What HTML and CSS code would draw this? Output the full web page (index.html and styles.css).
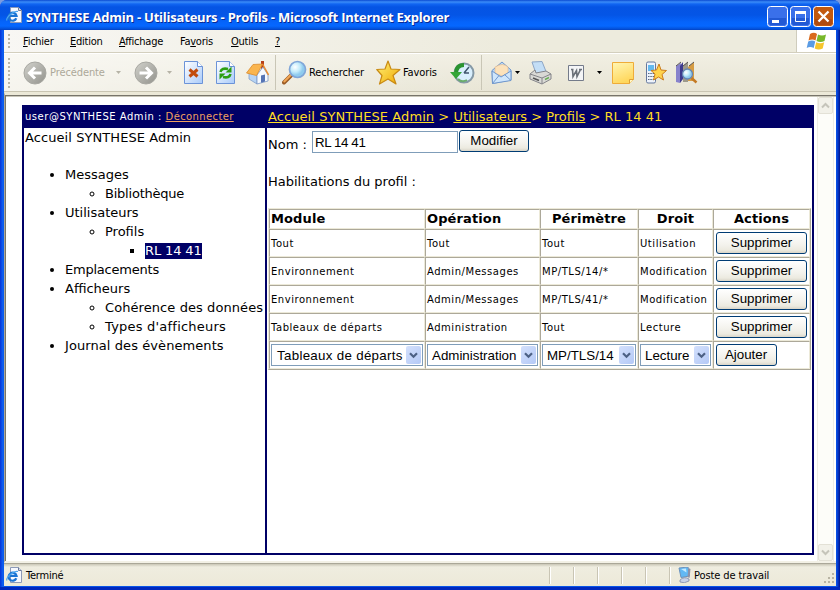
FILE: index.html
```html
<!DOCTYPE html>
<html lang="fr">
<head>
<meta charset="utf-8">
<title>SYNTHESE Admin - Utilisateurs - Profils</title>
<link rel="stylesheet" href="styles.css">
</head>
<body>
<svg class="defs" width="0" height="0">
  <defs>
    <linearGradient id="gray" x1="0" y1="0" x2="1" y2="1"><stop offset="0" stop-color="#d2d2cc"/><stop offset="1" stop-color="#92928c"/></linearGradient>
    <linearGradient id="sheet" x1="0" y1="0" x2="1" y2="1"><stop offset="0" stop-color="#fff"/><stop offset="1" stop-color="#a9cbfa"/></linearGradient>
    <linearGradient id="gold" x1="0" y1="0" x2="1" y2="1"><stop offset="0" stop-color="#fff27a"/><stop offset="1" stop-color="#f0a800"/></linearGradient>
    <linearGradient id="paper" x1="0" y1="0" x2=".4" y2="1"><stop offset="0" stop-color="#fff6b4"/><stop offset="1" stop-color="#ffd75c"/></linearGradient>
    <radialGradient id="lens" cx=".35" cy=".35"><stop offset="0" stop-color="#fff"/><stop offset=".6" stop-color="#c4ecfb"/><stop offset="1" stop-color="#8fcbee"/></radialGradient>
    <symbol id="ie" viewBox="0 0 17 17">
      <path d="M4.500.5h8l3 3v12h-11z" fill="#f7f9ff" stroke="#8d9ab8"/><path d="M12.500.5v3h3" fill="#d6ddec" stroke="#6b7898"/>
      <path d="M10.300 11.300A4 4 0 1 1 10.500 8.800H4" fill="none" stroke="#1b74d4" stroke-width="2.200"/>
      <path d="M1 13.500C-.5 11 7 3.500 12 4.500" fill="none" stroke="#4aa5ee" stroke-width="1.200"/>
    </symbol>
    <symbol id="drop" viewBox="0 0 5 3"><path d="M0 0h5L2.500 3z" fill="currentColor"/></symbol>
    <symbol id="chev" viewBox="0 0 9 7"><path d="M1 1.200l3.500 3.500L8 1.200" fill="none" stroke="#4d6185" stroke-width="2.200"/></symbol>
  </defs>
</svg>
<div class="window">
  <header class="titlebar">
    <svg class="app-icon" width="17" height="17"><use href="#ie"/></svg>
    <span class="title">SYNTHESE Admin - Utilisateurs - Profils - Microsoft Internet Explorer</span>
    <div class="controls">
      <svg width="21" height="21"><rect x=".5" y=".5" width="20" height="20" rx="3" fill="#3a70ea" stroke="#fff"/><path d="M2 12h17v5q0 2-2 2H4q-2 0-2-2z" fill="#2259d4"/><path d="M5 14h7v3H5z" fill="#fff"/></svg>
      <svg width="21" height="21"><rect x=".5" y=".5" width="20" height="20" rx="3" fill="#3a70ea" stroke="#fff"/><path d="M2 12h17v5q0 2-2 2H4q-2 0-2-2z" fill="#2259d4"/><path d="M5.500 6.500h10v9h-10z" fill="none" stroke="#fff"/><path d="M5 5h11v3H5z" fill="#fff"/></svg>
      <svg width="21" height="21"><rect x=".5" y=".5" width="20" height="20" rx="3" fill="#c2590f" stroke="#fff"/><path d="M2 13h17v4q0 2-2 2H4q-2 0-2-2z" fill="#b04c10"/><path d="M5.500 5.500l10 10M15.500 5.500l-10 10" stroke="#fff" stroke-width="2.300"/></svg>
    </div>
  </header>
  <nav class="menubar">
    <i class="grip"></i>
    <span class="m1"><u>F</u>ichier</span><span class="m2"><u>E</u>dition</span><span class="m3"><u>A</u>ffichage</span><span class="m4">Fa<u>v</u>oris</span><span class="m5"><u>O</u>utils</span><span><u>?</u></span>
    <div class="flag">
      <svg width="21" height="19" viewBox="0 0 21 19"><path d="M4 2q4-2.500 7 0L9.500 8.500q-3-2-7 0z" fill="#d96a1c"/><path d="M12 2.500q4 2 8 0L18.500 9q-4 2-8 0z" fill="#78b82a"/><path d="M2.200 9.500q4-2 7 0L7.700 16q-3.500-2-7 0z" fill="#5a9be4"/><path d="M10.200 10.200q4 2 8 0l-1.500 6.300q-4 2-8 0z" fill="#f6c52c"/></svg>
    </div>
  </nav>
  <div class="toolbar">
    <i class="grip"></i>
    <div class="tool back">
      <svg width="24" height="24" viewBox="0 0 24 24"><circle cx="12" cy="12" r="11" fill="url(#gray)" stroke="#a8a8a2"/><path d="M18.500 12H7M12 6.500L6.500 12l5.500 5.500" fill="none" stroke="#fff" stroke-width="3"/></svg>
      <span>Précédente</span>
    </div>
    <svg class="drop pale d1" width="5" height="3"><use href="#drop"/></svg>
    <svg class="fwd" width="24" height="24" viewBox="0 0 24 24"><circle cx="12" cy="12" r="11" fill="url(#gray)" stroke="#a8a8a2"/><path d="M5.500 12H17M12 6.500l5.500 5.500-5.500 5.500" fill="none" stroke="#fff" stroke-width="3"/></svg>
    <svg class="drop pale d2" width="5" height="3"><use href="#drop"/></svg>
    <svg class="stop" width="19" height="23" viewBox="0 0 19 23"><path d="M.5.5h13l5 5v17H.5z" fill="url(#sheet)" stroke="#6b93d8"/><path d="M13.500.5v5h5" fill="#fff" stroke="#6b93d8"/><path d="M5.500 8.500l8 7M13.500 8.500l-8 7" stroke="#c24c0c" stroke-width="3"/></svg>
    <svg class="refresh" width="19" height="23" viewBox="0 0 19 23"><path d="M.5.5h13l5 5v17H.5z" fill="url(#sheet)" stroke="#6b93d8"/><path d="M13.500.5v5h5" fill="#fff" stroke="#6b93d8"/><path d="M4.500 11q1-4.500 7.500-3M14.500 13q-1 4.500-7.500 3" fill="none" stroke="#2c9e12" stroke-width="2.600"/><path d="M15.500 5.500v6h-6zM3.500 18.500v-6h6z" fill="#2c9e12"/></svg>
    <svg class="home" width="23" height="24" viewBox="0 0 23 24"><path d="M15 0h3v8h-3z" fill="#b8401a"/><path d="M3 11v7l8 5V12z" fill="#b7d4f4" stroke="#7896c4" stroke-width=".7"/><path d="M11 14l6-8 5 8v6l-11 3z" fill="#f6faff" stroke="#7896c4" stroke-width=".8"/><path d="M.5 12L7 3.500 16.500 3l-6 11.500z" fill="#fab54e" stroke="#dc8b2c" stroke-width=".8"/><path d="M16.500 3l6 11" stroke="#e98c32" stroke-width="1.500"/><path d="M15 14.500l4-1v7l-4 1.200z" fill="#5574b4"/></svg>
    <i class="sep"></i>
    <div class="tool search">
      <svg width="25" height="25" viewBox="0 0 25 25"><path d="M2 22.500l9-9" stroke="#9a5b26" stroke-width="4" stroke-linecap="round"/><path d="M2.300 21.500l8-8" stroke="#f1a655" stroke-width="2" stroke-linecap="round"/><circle cx="15.500" cy="9.500" r="8" fill="url(#lens)" stroke="#80a6d8" stroke-width="1.700"/></svg>
      <span>Rechercher</span>
    </div>
    <div class="tool favs">
      <svg width="25" height="25" viewBox="0 0 25 25"><path d="M12 1l3 8 9 .5-7 6 3 8.500-8-5-8.500 5L6 15.500.8 9.500 9 9z" fill="url(#gold)" stroke="#c98a14" stroke-width="1.200" stroke-linejoin="round"/></svg>
      <span>Favoris</span>
    </div>
    <svg class="history" width="25" height="24" viewBox="0 0 25 24"><circle cx="14" cy="12" r="9.500" fill="#d9effd" stroke="#8599a6" stroke-width="2"/><path d="M14 12l5-6M14 12h5" stroke="#40566e" stroke-width="1.500"/><path d="M14 4q-8 0-8 9" fill="none" stroke="#2a9430" stroke-width="4"/><path d="M0 11h12l-6 7z" fill="#34a637"/><path d="M8 18q4 4 9 1" fill="none" stroke="#6aac6c" stroke-width="2"/></svg>
    <i class="sep"></i>
    <svg class="mail" width="21" height="24" viewBox="0 0 21 24"><path d="M1 9.500L11 1l9 8v10L1.500 22.500z" fill="#b8d8f8" stroke="#7097cc"/><path d="M4 9V6q8-5 13 0v6l-6 3-7-3z" fill="#fce2bb" stroke="#e4b684" stroke-width=".6"/><path d="M1 10l9 6 10-6v9.500L1.500 22.500z" fill="#cfe6fc" stroke="#7097cc"/><path d="M1.500 22.500L8 14.500M20 19.500l-6.500-6" stroke="#7097cc"/></svg>
    <svg class="drop d3" width="5" height="3"><use href="#drop"/></svg>
    <svg class="printer" width="23" height="24" viewBox="0 0 23 24"><path d="M3 1l10-.5 4 10-10 2z" fill="#c3def6" stroke="#8ca5c5"/><path d="M1 13l5-4 1 3 10-2 5 3v5l-9 5-12-5z" fill="#d9d9d5" stroke="#85858a"/><path d="M1 13l12 4 9-4M13 17v6" fill="none" stroke="#85858a"/><path d="M4 17l6 2.500" stroke="#555" stroke-width="1.500"/><path d="M16 18.500l4-2" stroke="#69ad57" stroke-width="1.500"/></svg>
    <svg class="word" width="16" height="16" viewBox="0 0 16 16"><path d="M.5.500h15v15H.5z" fill="#f4f5f7" stroke="#747b8a"/><path d="M3 4.500h2.500M4.500 4.500l.5 7 3.500-6 .5 6 3.500-7M11 4.500h3" fill="none" stroke="#6a7078" stroke-width="1.600"/></svg>
    <svg class="drop d4" width="5" height="3"><use href="#drop"/></svg>
    <svg class="note" width="22" height="22" viewBox="0 0 22 22"><path d="M.5.500h21v17l-4 4H.5z" fill="url(#paper)" stroke="#efac38"/><path d="M17.500 21.500v-4h4" fill="#fff6c5" stroke="#dfa034"/></svg>
    <svg class="phone" width="21" height="23" viewBox="0 0 21 23"><rect x=".5" y="1" width="9" height="21" rx="1.500" fill="#edf3fc" stroke="#65789d"/><path d="M2 4h6v6H2z" fill="#63b9ee"/><path d="M2 12.500h6M2 15.500h6M2 18.500h6" stroke="#596880" stroke-dasharray="1.500 .8"/><path d="M13 3l2 6 5.500.5-4.500 4 1.500 5.500-5-3-5 3L9 13 5 9.500l5.500-.5z" fill="#ffd34c" stroke="#cc7c1b"/></svg>
    <svg class="books" width="23" height="23" viewBox="0 0 23 23"><path d="M1 5l5-3v17l-1 3-4-1z" fill="#8782cc"/><path d="M5 5l3-4v17l-3 4z" fill="#3e3b8e"/><path d="M8 5l5-4v20H8z" fill="#9d9a8b"/><path d="M13 6l6-5v19h-6z" fill="#d59c44"/><path d="M1 5L6 1M8 5l5-4M14 5l5-4" stroke="#565253"/><circle cx="12.500" cy="13" r="5" fill="url(#lens)" stroke="#6585b3" stroke-width="1.300"/><path d="M16.500 17l5 4.500" stroke="#c47a24" stroke-width="2.500"/></svg>
  </div>
  <div class="client">
    <main class="page">
      <div class="frame">
        <div class="user">user@SYNTHESE Admin : <a>Déconnecter</a></div>
        <div class="crumbs"><a class="first">Accueil SYNTHESE Admin</a> &gt; <a>Utilisateurs </a>&gt; <a>Profils</a> &gt; RL 14 41</div>
        <aside class="tree">
          <div class="first">Accueil SYNTHESE Admin</div>
          <ul>
            <li>Messages<ul><li class="tight">Bibliothèque</li></ul></li>
            <li>Utilisateurs<ul><li>Profils<ul><li><span class="current">RL 14 41</span></li></ul></li></ul></li>
            <li class="tight">Emplacements</li>
            <li>Afficheurs<ul><li class="first">Cohérence des données</li><li class="wide">Types d'afficheurs</li></ul></li>
            <li class="first">Journal des évènements</li>
          </ul>
        </aside>
        <section class="content">
          <div class="name-row"><label>Nom :</label><input value="RL 14 41"><button class="modify">Modifier</button></div>
          <p class="caption">Habilitations du profil :</p>
          <table>
            <colgroup><col class="c1"><col class="c2"><col class="c3"><col class="c4"><col class="c5"></colgroup>
            <tr><th class="left">Module</th><th class="left">Opération</th><th>Périmètre</th><th>Droit</th><th>Actions</th></tr>
            <tr><td>Tout</td><td>Tout</td><td>Tout</td><td>Utilisation</td><td><button>Supprimer</button></td></tr>
            <tr><td>Environnement</td><td>Admin/Messages</td><td>MP/TLS/14/*</td><td>Modification</td><td><button>Supprimer</button></td></tr>
            <tr><td>Environnement</td><td>Admin/Messages</td><td>MP/TLS/41/*</td><td>Modification</td><td><button>Supprimer</button></td></tr>
            <tr><td>Tableaux de départs</td><td>Administration</td><td>Tout</td><td>Lecture</td><td><button>Supprimer</button></td></tr>
            <tr class="form">
              <td><div class="select loose">Tableaux de départs<i><svg width="9" height="7"><use href="#chev"/></svg></i></div></td>
              <td><div class="select">Administration<i><svg width="9" height="7"><use href="#chev"/></svg></i></div></td>
              <td><div class="select">MP/TLS/14<i><svg width="9" height="7"><use href="#chev"/></svg></i></div></td>
              <td><div class="select">Lecture<i><svg width="9" height="7"><use href="#chev"/></svg></i></div></td>
              <td><button class="add">Ajouter</button></td>
            </tr>
          </table>
        </section>
      </div>
    </main>
    <div class="scrollbar">
      <span><svg width="9" height="7" viewBox="0 0 9 7"><path d="M1 5.500L4.500 2 8 5.500" fill="none" stroke="#c5c4ba" stroke-width="2"/></svg></span>
      <span><svg width="9" height="7" viewBox="0 0 9 7"><path d="M1 1.500L4.500 5 8 1.500" fill="none" stroke="#c5c4ba" stroke-width="2"/></svg></span>
    </div>
  </div>
  <footer class="statusbar">
    <div class="status"><svg width="17" height="17"><use href="#ie"/></svg><span>Terminé</span></div>
    <i></i><i></i><i></i><i></i><i></i>
    <div class="zone">
      <svg width="13" height="16" viewBox="0 0 13 16"><path d="M1 1l9-1 1.500 9L3 10.500z" fill="#62b8f4" stroke="#6b92bd"/><path d="M3 2l5-.5.5 4z" fill="#c5eaff"/><path d="M10.500 1l2 1-1 9-2-1z" fill="#8d91a8"/><path d="M2 13q4-4 9-1v2q-5 3-9 1z" fill="#c9d2e8" stroke="#7480a0" stroke-width=".7"/></svg>
      <span>Poste de travail</span>
      <svg class="resize" width="11" height="11" viewBox="0 0 11 11"><path d="M8 0h2v2H8zM4 4h2v2H4zM8 4h2v2H8zM0 8h2v2H0zM4 8h2v2H4zM8 8h2v2H8z" fill="#b8b4a3"/></svg>
    </div>
  </footer>
</div>
</body>
</html>
```
FILE: styles.css
```css
* { box-sizing: border-box; }
body { margin: 0; background: #7b9be0; overflow: hidden; }
svg { display: block; flex: none; }
.defs { position: absolute; }
i { font-style: normal; }
.window {
  width: 840px; height: 590px; display: flex; flex-direction: column;
  padding: 0 4px 4px; border-radius: 7px 7px 0 0;
  background: linear-gradient(90deg, #0733d8 0, #0e62f2 3px, #0855e8 4px, #0855e8 836px, #0748df 837px, #00138c 840px);
  box-shadow: inset 0 -3px 0 #0028bd;
  font: 11px/14px "DejaVu Sans Condensed", "DejaVu Sans", sans-serif; color: #000;
}
.titlebar {
  height: 30px; margin: 0 -4px; padding: 0 6px; display: flex; align-items: center; flex: none;
  border-radius: 7px 7px 0 0;
  background: linear-gradient(#0a4ad2 0, #3b8cf8 2px, #1165f2 4px, #0554e4 7px, #0455e6 15px, #0564fb 22px, #0567ff 26px, #0350d8 29px, #0340c0 30px);
}
.app-icon { margin: 0 3px 0 0; }
.title {
  font: bold 13px/16px "Open Sans", sans-serif; color: #fff; white-space: nowrap;
  text-shadow: 1px 1px 0 #0a2a94; margin-top: 3px; letter-spacing: -0.22px;
}
.controls { display: flex; gap: 2px; margin: 3px 0 0 auto; }
.menubar {
  height: 23px; display: flex; align-items: center; flex: none; padding-left: 4px;
  background: linear-gradient(90deg, #f8f7f4, #edebdd 60%); border-bottom: 1px solid #d3cfbe; letter-spacing: -0.25px;
}
.menubar span { white-space: nowrap; padding-top: 1px; }
.grip { width: 2px; height: 16px; background: repeating-linear-gradient(#b9b6a7 0 2px, transparent 2px 4px); flex: none; }
.menubar .grip { height: 14px; margin-right: 13px; }
.m1 { width: 47px; } .m2 { width: 49px; } .m3 { width: 61px; } .m4 { width: 51px; } .m5 { width: 44px; }
.flag {
  margin-left: auto; width: 40px; height: 22px; background: #fff; border-left: 1px solid #cfccbc;
  display: flex; align-items: center; justify-content: center;
}
.toolbar {
  height: 39px; flex: none; display: flex; align-items: center; padding-left: 4px;
  background: linear-gradient(90deg, rgba(255,255,255,.6), rgba(255,255,255,0) 60%), linear-gradient(#f1efe3, #e8e5d5);
  border-top: 1px solid #fff; border-bottom: 1px solid #c9c5b2;
}
.toolbar .grip { height: 30px; }
.tool { display: flex; align-items: center; gap: 3px; white-space: nowrap; }
.tool span { flex: none; letter-spacing: -0.1px; padding-top: 1px; }
.back { margin-left: 13px; width: 93px; color: #aca899; }
.pale { color: #b6b3a6; }
.d2 { margin-left: 9px; }
.fwd { margin-left: 13px; }
.stop { margin-left: 12px; }
.refresh { margin-left: 13px; }
.home { margin-left: 11px; }
.sep { width: 1px; height: 35px; background: #c9c6b6; margin-left: 6px; flex: none; }
.search { margin-left: 6px; width: 94px; gap: 2px; }
.favs { width: 74px; gap: 2px; }
.history { margin-left: 0; }
.mail { margin-left: 9px; }
.d3 { margin-left: 3px; }
.printer { margin-left: 9px; }
.word { margin-left: 16px; }
.d4 { margin-left: 13px; }
.note { margin-left: 10px; }
.phone { margin-left: 12px; }
.books { margin-left: 8px; }
.client {
  height: 471px; flex: none; display: flex; background: #fff; border-left: 1px solid #aca899;
  border-top: 3px solid #ece9d8; border-bottom: 2px solid #f3f1e6; box-shadow: inset 1px 1px 0 #77746a, inset 0 2px 0 #c9c7ba; padding: 2px 2px 0 1px;
}
.page { width: 811px; padding: 8px 3px 0 16px; font: 13px/19px "DejaVu Sans", Verdana, sans-serif; }
.frame {
  height: 450px; display: grid; grid-template: 21px 425px / 241px 545px; column-gap: 2px;
  background: #006; border: 2px solid #006;
}
.user { font-size: 10px; color: #fff; padding-left: 1px; line-height: 20px; white-space: nowrap; letter-spacing: 0.52px; }
.user a { color: #f0a060; text-decoration: underline; letter-spacing: 0.38px; }
.crumbs { color: #fd2; padding-left: 1px; line-height: 20px; white-space: nowrap; }
.crumbs a { text-decoration: underline; }
.first { letter-spacing: 0.08px; }
.wide { letter-spacing: 0.22px; }
.tight { letter-spacing: -0.22px; }
.tree { background: #fff; padding-left: 1px; white-space: nowrap; }
.tree ul { margin: 0; padding-left: 40px; }
.tree > ul { margin-top: 18px; }
.current { background: #006; color: #fff; display: inline-block; line-height: 16px; letter-spacing: -0.12px; }
.content { background: #fff; padding: 2px 1px 0; }
.name-row { display: flex; height: 24px; align-items: flex-start; }
.name-row label { width: 44px; padding-top: 5px; white-space: nowrap; }
input, button, .select { font: 13.33px/16px "Liberation Sans", Arial, sans-serif; color: #000; letter-spacing: 0; }
input { width: 146px; height: 22px; margin: 1px 1px 0 0; border: 1px solid #7f9db9; padding: 0 2px; background: #fff; border-radius: 0; letter-spacing: -0.4px; }
button {
  display: block; width: 91px; height: 22px; padding: 0 0 1px; border: 1px solid #003c74; border-radius: 3px;
  background: linear-gradient(#fff, #f3f2ec 60%, #eceae0 85%, #d9d5c8);
}
.modify { width: 70px; }
.add { width: 61px; padding-right: 1px; }
.caption { margin: 18px 0 17px; height: 19px; }
table { width: 543px; table-layout: fixed; border-collapse: separate; border-spacing: 0; border: 1px solid; border-color: #ece9d8 #aca899 #aca899 #ece9d8; }
.c1 { width: 156px; } .c2 { width: 115px; } .c3 { width: 98px; } .c4 { width: 75px; } .c5 { width: 97px; }
tr { height: 28px; }
tr:first-child { height: 20px; }
th, td { border: 1px solid; border-color: #aca899 #ece9d8 #ece9d8 #aca899; padding: 0 1px; white-space: nowrap; overflow: hidden; }
th { font-size: 13px; line-height: 18px; letter-spacing: 0.12px; }
td { font-size: 10px; line-height: 14px; letter-spacing: 0.54px; padding-top: 2px; }
td:last-child { padding: 0 1px 0 2px; }
.form td { padding-top: 0; }
.left { text-align: left; }
.select { height: 22px; border: 1px solid #7f9db9; display: flex; align-items: center; padding: 1px 1px 0 4px; }
.loose { padding-left: 5px; letter-spacing: 0.3px; }
.select i { margin: -1px 0 0 auto; width: 15px; height: 18px; border-radius: 2px; background: linear-gradient(135deg, #d3e0fc, #b4c9f6); display: flex; align-items: center; justify-content: center; }
.scrollbar { width: 17px; background: #fdfdf9; border-left: 1px solid #eeede5; border-right: 1px solid #eeede5; display: flex; flex-direction: column; justify-content: space-between; }
.scrollbar span { height: 17px; background: #f2f1e9; border: 1px solid #e3e1d6; border-radius: 2px; display: flex; align-items: center; justify-content: center; }
.statusbar { height: 23px; flex: none; display: flex; align-items: center; background: linear-gradient(#c9c6b6, #efede0 3px, #ece9d8); border-top: 1px solid #aaa798; }
.statusbar span { padding-top: 2px; }
.status { width: 545px; display: flex; align-items: center; gap: 3px; padding-left: 2px; letter-spacing: -0.2px; }
.statusbar > i { width: 24px; height: 17px; border-left: 1px solid #c9c5b4; box-shadow: inset 1px 0 0 #fff; flex: none; }
.zone { flex: 1; height: 17px; display: flex; align-items: center; gap: 3px; border-left: 1px solid #c9c5b4; box-shadow: inset 1px 0 0 #fff; padding-left: 8px; letter-spacing: -0.1px; }
.resize { margin: 6px 1px 0 auto; }
```
